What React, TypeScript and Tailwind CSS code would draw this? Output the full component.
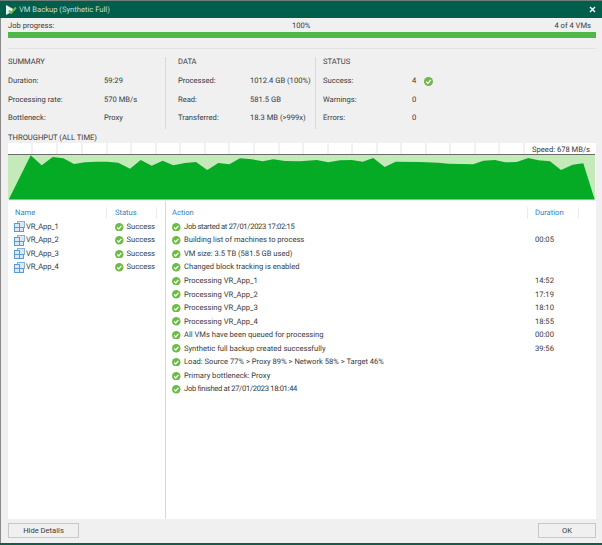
const chartPoints =
  "8.7,199.5 30.7,155.3 41.7,165.3 52.7,157 63.3,158.3 74,164 85,162.3 96.7,161.7 107,161.7 118.3,162.7 130,168.7 140.7,160 151.7,165.7 162.7,160.7 173.3,165.3 185,163 196,162 207.3,170 218.3,163 229.3,164.3 240,158.3 251.7,159.3 262.7,161.3 273.3,159.3 285,161 300,161.3 316.7,160 328.3,162.3 340,160.3 351.7,160 362.7,161.7 373.3,158 384.7,167 395.7,161.7 420,162 438.3,162.7 448.3,163.7 473.3,164.3 483.3,160.7 495,160 505,162.3 516.7,162 528.3,158 538.3,160.3 550,161.3 561,170 572.7,164.7 583.3,163.3 594.7,199.5";

const gridLines = [32, 57, 82, 107, 131, 156, 180, 205, 229, 254, 279, 303, 328, 352, 377, 401, 426, 450, 475, 499, 524];

const vms = ["VR_App_1", "VR_App_2", "VR_App_3", "VR_App_4"];

const actions = [
  { text: "Job started at 27/01/2023 17:02:15", duration: "", tight: true },
  { text: "Building list of machines to process", duration: "00:05" },
  { text: "VM size: 3.5 TB (581.5 GB used)", duration: "" },
  { text: "Changed block tracking is enabled", duration: "" },
  { text: "Processing VR_App_1", duration: "14:52" },
  { text: "Processing VR_App_2", duration: "17:19" },
  { text: "Processing VR_App_3", duration: "18:10" },
  { text: "Processing VR_App_4", duration: "18:55" },
  { text: "All VMs have been queued for processing", duration: "00:00" },
  { text: "Synthetic full backup created successfully", duration: "39:56" },
  { text: "Load: Source 77% > Proxy 89% > Network 58% > Target 46%", duration: "" },
  { text: "Primary bottleneck: Proxy", duration: "" },
  { text: "Job finished at 27/01/2023 18:01:44", duration: "", tight: true },
];

function CheckIcon({ size = 8.5 }: { size?: number }) {
  return (
    <svg width={size} height={size} viewBox="0 0 16 16" className="shrink-0">
      <circle cx="8" cy="8" r="8" fill="#6cbb45" />
      <path d="M4 8.3 L7 11.2 L12 5.4" fill="none" stroke="#fff" strokeWidth="2.4" />
    </svg>
  );
}

function VmIcon() {
  return (
    <svg width="11" height="11" viewBox="0 0 11 11" className="shrink-0">
      <rect x="3.5" y="0.5" width="7" height="6" fill="#dbe9f6" stroke="#7fb2dc" />
      <rect x="0.5" y="2.5" width="5" height="4" fill="#dbe9f6" stroke="#5b9bd0" />
      <rect x="0.5" y="6.5" width="5" height="4" fill="#dbe9f6" stroke="#5b9bd0" />
      <rect x="5.5" y="6.5" width="4" height="4" fill="#dbe9f6" stroke="#5b9bd0" />
    </svg>
  );
}

function StatRow({ label, value, labelWidth, children }: { label: string; value: string; labelWidth: string; children?: React.ReactNode }) {
  return (
    <div className="flex h-[18.5px] items-center">
      <span className={labelWidth}>{label}</span>
      <span>{value}</span>
      {children}
    </div>
  );
}

export default function App() {
  return (
    <div
      className="flex h-[545px] w-[602px] flex-col overflow-hidden bg-[#f0f0f0] text-[7.6px] leading-[10px] text-[#3a3a3a] [text-rendering:geometricPrecision]"
      style={{ fontFamily: 'Roboto, sans-serif' }}
    >
      {/* Title bar */}
      <div className="flex h-[18px] shrink-0 items-center border-t border-[#6f7f7a] bg-[#005f4b] pl-[5px] pr-[4px] text-[#c9ded8]">
        <svg width="12" height="12" viewBox="0 0 12 12" className="shrink-0">
          <path d="M1 1 L10 6 L1 11 Z" fill="#e8f2ee" />
          <path d="M4 6.5 L6 9 L11 3.5" fill="none" stroke="#6cbb45" strokeWidth="2" />
        </svg>
        <span className="ml-[2px]">VM Backup (Synthetic Full)</span>
        <svg width="7" height="7" viewBox="0 0 7 7" className="ml-auto mr-[2px]">
          <path d="M1 1 L6 6 M6 1 L1 6" stroke="#fff" strokeWidth="1.4" />
        </svg>
      </div>

      <div className="flex min-h-0 flex-1 flex-col border-l border-[#8a8a8a] pl-[7px] pr-[6px]">
        {/* Job progress */}
        <div className="flex h-[14px] shrink-0 items-center pt-[1px]">
          <span className="w-[284px]">Job progress:</span>
          <span className="flex-1">100%</span>
          <span className="mr-[5px]">4 of 4 VMs</span>
        </div>
        <div className="h-[6px] shrink-0 bg-[#50b848]" />
        <div className="mt-[10px] h-px shrink-0 bg-[#e2e2e2]" />

        {/* Stats */}
        <div className="mt-[8px] flex h-[72px] shrink-0">
          <div className="w-[158px] border-r border-[#d8d8d8]">
            <div className="h-[15px]">SUMMARY</div>
            <StatRow label="Duration:" value="59:29" labelWidth="w-[96px]" />
            <StatRow label="Processing rate:" value="570 MB/s" labelWidth="w-[96px]" />
            <StatRow label="Bottleneck:" value="Proxy" labelWidth="w-[96px]" />
          </div>
          <div className="w-[150px] border-r border-[#d8d8d8] pl-[12px]">
            <div className="h-[15px]">DATA</div>
            <StatRow label="Processed:" value="1012.4 GB (100%)" labelWidth="w-[72px]" />
            <StatRow label="Read:" value="581.5 GB" labelWidth="w-[72px]" />
            <StatRow label="Transferred:" value="18.3 MB (>999x)" labelWidth="w-[72px]" />
          </div>
          <div className="flex-1 pl-[7px]">
            <div className="h-[15px]">STATUS</div>
            <StatRow label="Success:" value="4" labelWidth="w-[89px]">
              <span className="ml-[8px]">
                <CheckIcon size={9} />
              </span>
            </StatRow>
            <StatRow label="Warnings:" value="0" labelWidth="w-[89px]" />
            <StatRow label="Errors:" value="0" labelWidth="w-[89px]" />
          </div>
        </div>

        {/* Throughput chart */}
        <div className="mt-[4px] h-[10px] shrink-0">THROUGHPUT (ALL TIME)</div>
        <div className="relative h-[57px] w-[588px] shrink-0">
          <svg width="588" height="57" viewBox="8 143 588 57" className="block">
            <rect x="8" y="143" width="588" height="57" fill="#fff" />
            {gridLines.map((x) => (
              <line key={x} x1={x} y1="143" x2={x} y2="154" stroke="#e4e4e4" strokeWidth="1" />
            ))}
            <rect x="8" y="154.5" width="587" height="45" fill="#c5eab9" />
            <line x1="8" y1="154.5" x2="595" y2="154.5" stroke="#6b6b6b" strokeWidth="1" />
            <polygon points={chartPoints} fill="#05ab25" />
          </svg>
          <span className="absolute right-[6px] top-[2px] text-[#333]">Speed: 678 MB/s</span>
        </div>

        {/* Details panel */}
        <div className="mt-px flex h-[318px] w-[588px] shrink-0 bg-white">
          <div className="w-[158px] shrink-0 border-r border-[#d8d8d8]">
            <div className="flex h-[19px] items-center pt-[5px] text-[#2f7fc1]">
              <span className="flex h-[12px] w-[99px] items-center border-r border-[#ececec] pl-[7px]">Name</span>
              <span className="flex h-[12px] w-[50px] items-center border-r border-[#ececec] pl-[8px]">Status</span>
            </div>
            {vms.map((vm) => (
              <div key={vm} className="flex h-[13.55px] items-center">
                <div className="flex w-[99px] items-center gap-[1px] pl-[6px]">
                  <VmIcon />
                  <span className="tracking-[-0.2px]">{vm}</span>
                </div>
                <div className="flex items-center gap-[3px] pl-[8px]">
                  <CheckIcon />
                  <span>Success</span>
                </div>
              </div>
            ))}
          </div>
          <div className="min-w-0 flex-1">
            <div className="flex h-[19px] items-center pt-[5px] text-[#2f7fc1]">
              <span className="w-[361px] pl-[6px]">Action</span>
              <span className="flex h-[12px] w-[52px] items-center border-x border-[#ececec] pl-[7px]">Duration</span>
            </div>
            {actions.map((a) => (
              <div key={a.text} className="flex h-[13.55px] items-center">
                <div className="flex w-[361px] items-center gap-[3.5px] pl-[6px]">
                  <CheckIcon />
                  <span className={a.tight ? "tracking-[-0.3px]" : ""}>{a.text}</span>
                </div>
                <span className="pl-[8px]">{a.duration}</span>
              </div>
            ))}
          </div>
        </div>

        {/* Footer */}
        <div className="mt-[4px] flex shrink-0 justify-between">
          <button className="h-[15px] w-[71px] border border-[#c8c8c8] text-center text-[7.6px] leading-[13px]">Hide Details</button>
          <button className="h-[15px] w-[58px] border border-[#c8c8c8] text-center text-[7.6px] leading-[13px]">OK</button>
        </div>
      </div>
      <div className="h-[2px] shrink-0 bg-[#0f5d4a]" />
    </div>
  );
}
